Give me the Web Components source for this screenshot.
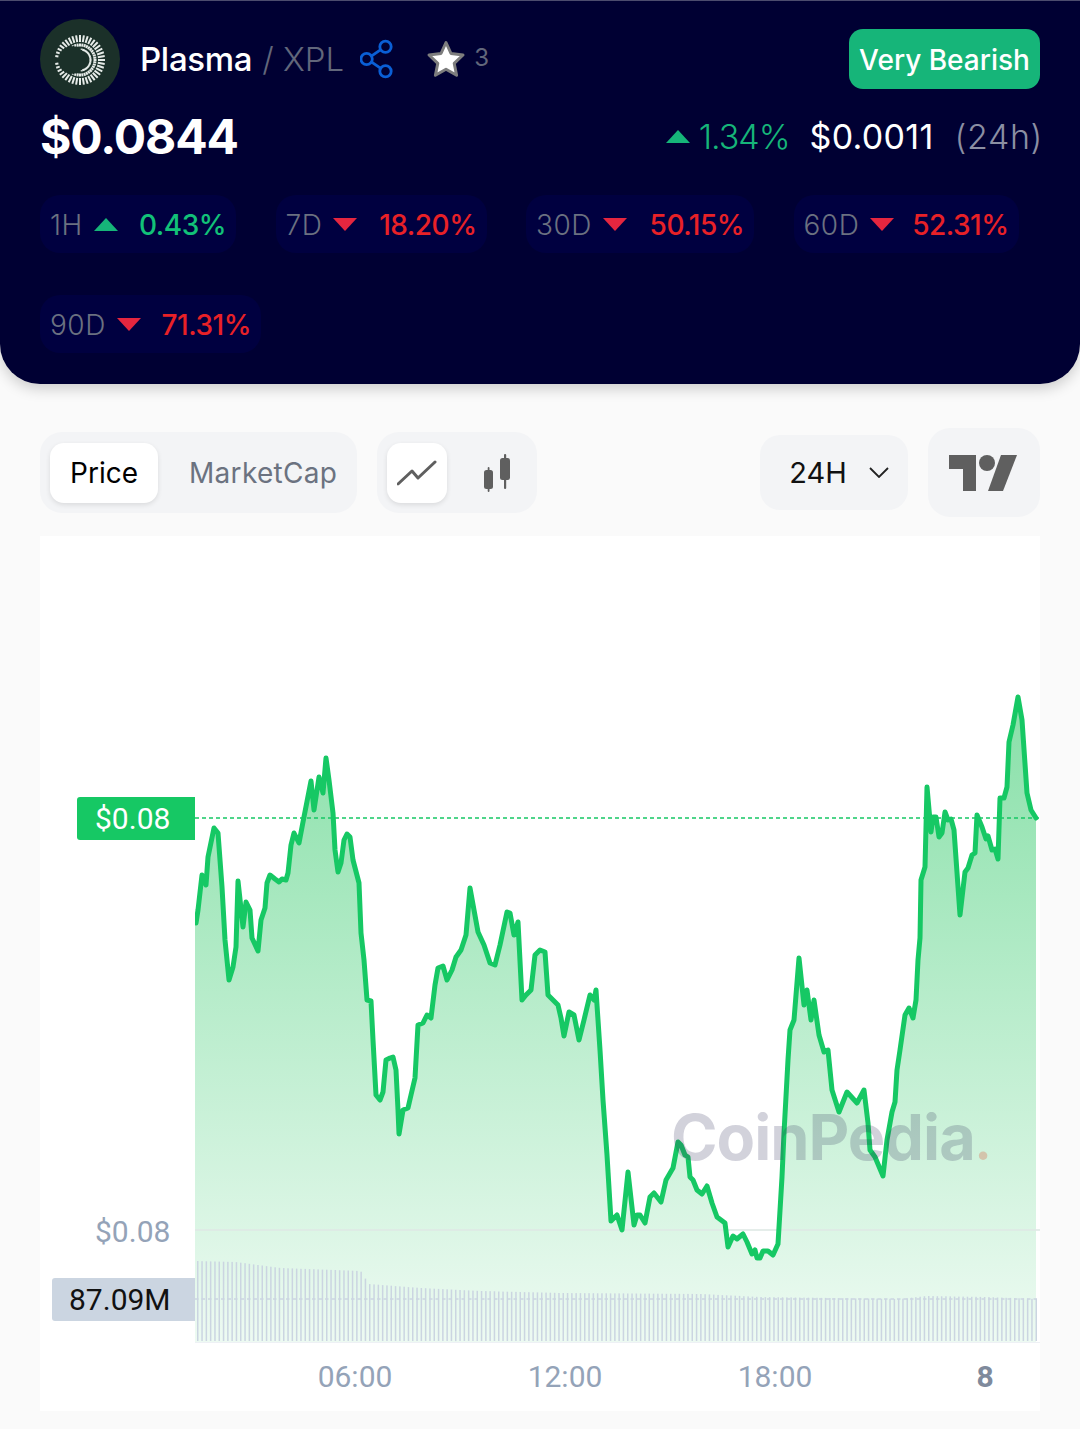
<!DOCTYPE html>
<html>
<head>
<meta charset="utf-8">
<title>Plasma</title>
<style>
    html, body { margin: 0; background: #fafafa; }
    body { font-family: "Inter", "Liberation Sans", sans-serif; width: 1080px; height: 1429px; overflow: hidden; }
</style>
</head>
<body>
<coin-header>
    <change-chip label="1H" value="0.43%" dir="up" w="196"></change-chip>
    <change-chip label="7D" value="18.20%" dir="down" w="211"></change-chip>
    <change-chip label="30D" value="50.15%" dir="down" w="228"></change-chip>
    <change-chip label="60D" value="52.31%" dir="down" w="225"></change-chip>
    <change-chip label="90D" value="71.31%" dir="down" w="221"></change-chip>
</coin-header>
<chart-toolbar></chart-toolbar>
<price-chart></price-chart>

<script>
const UP = `<svg width="24" height="13" viewBox="0 0 24 13"><path d="M12 0 24 13H0z" fill="#16b579"/></svg>`;
const DOWN = `<svg width="24" height="13" viewBox="0 0 24 13"><path d="M0 0H24L12 13z" fill="#e5263f"/></svg>`;

class ChangeChip extends HTMLElement {
    constructor() {
        super();
        this.attachShadow({ mode: "open" });
        const dir = this.getAttribute("dir");
        this.shadowRoot.innerHTML = `
            <style>
                :host {
                    display: inline-flex; align-items: center; height: 58px; width: ${this.getAttribute("w")}px;
                    padding: 2px 10px 0; border-radius: 20px; background: #000040;
                    font-size: 28px; box-sizing: border-box;
                }
                .label { color: #6b7180; margin-right: 11px; letter-spacing: .5px; font-weight: 300; }
                svg { display: block; margin: -2px 0 0; }
                .value { margin-left: auto; font-weight: 500; letter-spacing: -.5px; color: ${dir === "up" ? "#12c178" : "#e82127"}; }
            </style>
            <span class="label">${this.getAttribute("label")}</span>
            ${dir === "up" ? UP : DOWN}
            <span class="value">${this.getAttribute("value")}</span>
        `;
    }
}
customElements.define("change-chip", ChangeChip);

class CoinLogo extends HTMLElement {
    constructor() {
        super();
        this.attachShadow({ mode: "open" });
        // radial dashes between an outer circle and an off-centre hole, open on the left
        const d = 8, r = 14, outer = 25;
        let dashes = "";
        for (let a = -171; a <= 171; a += 9) {
            const rad = a * Math.PI / 180;
            const c = Math.cos(rad), s = Math.sin(rad);
            const inner = Math.max(9, -d * c + Math.sqrt(r * r - d * d * s * s));
            const x1 = 40 + outer * c, y1 = 41 + outer * s;
            const x2 = 40 + inner * c, y2 = 41 + inner * s;
            dashes += `<line x1="${x1.toFixed(1)}" y1="${y1.toFixed(1)}" x2="${x2.toFixed(1)}" y2="${y2.toFixed(1)}"/>`;
        }
        this.shadowRoot.innerHTML = `
            <style>:host { display: block; width: 80px; height: 80px; } svg { display: block; }</style>
            <svg width="80" height="80" viewBox="0 0 80 80">
                <circle cx="40" cy="40" r="40" fill="#1b3029"/>
                <g stroke="#e6ebe8" stroke-width="2" stroke-dasharray="7 1.500 3 2 2 2">${dashes}</g>
            </svg>
        `;
    }
}
customElements.define("coin-logo", CoinLogo);

class CoinHeader extends HTMLElement {
    constructor() {
        super();
        this.attachShadow({ mode: "open" });
        this.shadowRoot.innerHTML = `
            <style>
                :host {
                    display: block; box-sizing: border-box; height: 384px;
                    padding: 18px 40px 0; background: #000033; color: #fff;
                    border-top: 1px solid #4c4c6e;
                    border-radius: 0 0 40px 40px;
                    box-shadow: 0 5px 14px rgba(0,0,0,.18);
                }
                .top { display: flex; align-items: center; height: 80px; }
                .name { font-size: 33px; font-weight: 500; margin-left: 20px; letter-spacing: -.3px; }
                .sym { font-size: 33px; color: #62677b; margin-left: 10px; font-weight: 300; }
                .share { display: block; margin-left: 16px; }
                .star { display: block; margin-left: 32px; }
                .count { font-size: 24px; color: #62677b; margin-left: 8px; margin-top: -4px; }
                .mood {
                    margin-left: auto; height: 60px; width: 191px; box-sizing: border-box; padding-top: 2px;
                    border-radius: 14px; background: #16b579;
                    display: flex; align-items: center; justify-content: center;
                    font-size: 28px; font-weight: 500;
                }
                .prices { display: flex; align-items: center; height: 72px; margin-top: 1px; }
                .price { font-size: 48px; font-weight: 700; letter-spacing: -1.100px; }
                .change { margin: 0 -3px 0 auto; display: flex; align-items: center; font-size: 34px; }
                .change svg { margin-right: 9px; }
                .pct { color: #16b579; letter-spacing: -1px; font-weight: 300; }
                .abs { margin-left: 20px; letter-spacing: .3px; }
                .per { margin-left: 21px; color: #8b8fa3; font-weight: 300; letter-spacing: .6px; }
                .chips { display: flex; flex-wrap: wrap; gap: 42px 39.5px; margin-top: 23px; }
            </style>
            <div class="top">
                <coin-logo></coin-logo>
                <span class="name">Plasma</span>
                <span class="sym">/ XPL</span>
                <svg class="share" width="34" height="40" viewBox="0 0 36 42" fill="none" stroke="#0a5fd6" stroke-width="3">
                    <circle cx="27" cy="8" r="6"/><circle cx="7" cy="21" r="6"/><circle cx="27" cy="34" r="6"/>
                    <path d="M12 18 22 11M12 24 22 31"/>
                </svg>
                <svg class="star" width="40" height="38" viewBox="0 0 40 38">
                    <path d="M20 2.500 25 13.500 37 15 28.200 23.300 30.600 35.200 20 29.300 9.400 35.200 11.800 23.300 3 15 15 13.500z" fill="#fff" stroke="#7d7d7d" stroke-width="3" stroke-linejoin="round"/>
                </svg>
                <span class="count">3</span>
                <span class="mood">Very Bearish</span>
            </div>
            <div class="prices">
                <span class="price">$0.0844</span>
                <span class="change">
                    <svg width="24" height="13" viewBox="0 0 24 13"><path d="M12 0 24 13H0z" fill="#16b579"/></svg>
                    <span class="pct">1.34%</span>
                    <span class="abs">$0.0011</span>
                    <span class="per">(24h)</span>
                </span>
            </div>
            <div class="chips"><slot></slot></div>
        `;
    }
}
customElements.define("coin-header", CoinHeader);

class ChartToolbar extends HTMLElement {
    constructor() {
        super();
        this.attachShadow({ mode: "open" });
        this.shadowRoot.innerHTML = `
            <style>
                :host {
                    display: flex; align-items: center; height: 89px; margin-top: 44px;
                    padding: 0 40px; font-size: 28px;
                }
                .seg {
                    display: flex; align-items: center; height: 81px; box-sizing: border-box;
                    padding: 0 10px; background: #f3f4f6; border-radius: 22px;
                }
                .on {
                    height: 60px; background: #fff; border-radius: 14px; color: #000;
                    box-shadow: 0 2px 5px rgba(0,0,0,.1);
                    display: flex; align-items: center; justify-content: center;
                }
                .off { color: #6b7280; display: flex; align-items: center; }
                .price { width: 108px; }
                .cap { width: 189px; box-sizing: border-box; padding-left: 31px; letter-spacing: .3px; }
                .ico { width: 60px; }
                .ico2 { width: 80px; height: 60px; box-sizing: border-box; padding-left: 36px; }
                .types { margin-left: 20px; }
                .range {
                    margin-left: auto; width: 148px; height: 75px; box-sizing: border-box; padding-left: 10px;
                    border-radius: 20px; background: #f3f4f6; font-size: 29px;
                    display: flex; align-items: center; justify-content: center; gap: 22px; color: #111;
                }
                .tv {
                    margin-left: 20px; width: 112px; height: 89px; border-radius: 22px; background: #f3f4f6;
                    display: flex; align-items: center; justify-content: center;
                }
                .tv svg { margin-right: 2px; }
                svg { display: block; }
            </style>
            <div class="seg">
                <div class="on price">Price</div>
                <div class="off cap">MarketCap</div>
            </div>
            <div class="seg types">
                <div class="on ico">
                    <svg width="40" height="28" viewBox="0 0 40 28" fill="none" stroke="#5f5f5f" stroke-width="3" stroke-linecap="round" stroke-linejoin="round">
                        <path d="M1 25 15 12 21 19 38 3"/>
                    </svg>
                </div>
                <div class="off ico2">
                    <svg width="28" height="38" viewBox="0 0 28 38" fill="#5f5f5f">
                        <rect x="1" y="16" width="9" height="19" rx="2.500"/><rect x="4.700" y="13" width="1.800" height="25" rx=".9"/>
                        <rect x="17" y="4" width="10" height="22" rx="2.500"/><rect x="21" y="0" width="2.200" height="35" rx="1"/>
                    </svg>
                </div>
            </div>
            <div class="range">
                <span>24H</span>
                <svg width="20" height="11" viewBox="0 0 20 11" fill="none" stroke="#222" stroke-width="1.800"><path d="M1 1 10 10 19 1"/></svg>
            </div>
            <div class="tv">
                <svg width="68" height="36" viewBox="949 459 68 36" fill="#5f5f5f">
                    <path d="M949 459H976V495H963V473H949z"/><circle cx="987" cy="467" r="8"/><path d="M1001 459H1017L1003 495H988z"/>
                </svg>
            </div>
        `;
    }
}
customElements.define("chart-toolbar", ChartToolbar);

const LINE = [
    [196,923],[198,910],[202,875],[206,885],[208,857],[214,828],[218,833],[222,887],[225,940],[229,980],[233,967],[236,947],[238,881],[243,927],[246,902],[250,910],[252,938],[258,951],[261,920],[265,908],[267,883],[270,875],[275,879],[279,882],[282,879],[286,880],[288,873],[291,845],[294,833],[299,843],[303,822],[311,781],[314,810],[319,777],[323,793],[326,758],[329,780],[333,813],[335,850],[338,872],[341,863],[344,840],[347,834],[350,837],[353,860],[359,883],[361,933],[364,960],[367,1000],
    [371,1001],[373,1040],[376,1095],[380,1100],[383,1092],[386,1060],[390,1058],[393,1057],[396,1070],[398,1110],[399,1134],[403,1110],[408,1108],[411,1095],[415,1078],[418,1025],[423,1023],[427,1015],[431,1018],[435,985],[438,968],[443,966],[447,980],[452,970],[456,957],[461,950],[466,935],[470,888],[474,910],[478,932],[484,945],[490,963],[495,965],[500,945],[507,912],[510,913],[514,935],[518,922],[522,1000],[526,995],[531,990],[535,955],[540,950],[545,952],[548,995],[553,1000],[558,1005],[561,1018],[564,1036],[569,1012],[574,1015],[579,1040],[584,1020],[590,995],[594,1000],[596,990],[600,1050],[603,1100],[607,1155],[611,1221],[617,1215],[622,1230],[628,1172],[634,1225],[637,1215],[640,1215],[645,1223],[650,1197],[654,1193],[661,1202],[666,1180],[673,1168],[678,1142],[681,1145],[685,1155],[688,1157],[690,1177],[693,1180],[697,1190],[702,1194],[707,1186],[712,1203],[717,1217],[725,1223],[728,1247],[733,1236],[737,1239],[743,1234],[747,1242],[752,1254],[755,1250],[757,1258],[760,1258],[763,1251],[768,1251],[773,1255],[778,1244],[782,1177],[784,1133],[788,1060],
    [790,1030],[794,1020],[799,958],[804,1005],[807,990],[811,1020],[814,1000],[819,1035],[824,1052],[828,1050],[832,1090],[839,1112],[847,1092],[857,1103],[864,1090],[868,1123],[870,1150],[875,1157],[883,1176],[887,1140],[892,1112],[895,1102],[897,1070],[900,1050],[905,1015],[909,1008],[913,1018],[916,1000],[918,960],[920,938],[921,880],[925,867],[927,787],[931,832],[933,817],[936,817],[939,837],[942,833],[945,812],[948,820],[951,819],[954,830],[960,915],[965,872],[968,868],[972,855],[975,853],[977,815],[982,827],[986,839],[988,836],[992,850],[995,849],[998,859],[1000,798],[1004,798],[1007,787],[1009,742],[1013,725],[1018,697],[1022,720],[1027,793],[1031,810],[1036,818]
];

// top edge of the volume bars, by x
const VOLUME = [[195,1261],[235,1262],[280,1268],[360,1271],[368,1284],[420,1288],[480,1291],[560,1293],[700,1294],[760,1297],[900,1299],[925,1296],[985,1297],[1037,1299]];

function volumeTop(x) {
    for (let i = 1; i < VOLUME.length; i++) {
        if (x <= VOLUME[i][0]) {
            const [x0, y0] = VOLUME[i - 1], [x1, y1] = VOLUME[i];
            return y0 + (y1 - y0) * (x - x0) / (x1 - x0);
        }
    }
    return 1299;
}

class PriceChart extends HTMLElement {
    constructor() {
        super();
        this.attachShadow({ mode: "open" });
        const line = LINE.map(p => p.join(",")).join(" ");
        const area = `195,923 ${line} 1036,1342 195,1342`;
        let bars = "";
        for (let x = 197; x < 1038; x += 4.3) {
            const top = volumeTop(x);
            bars += `<rect x="${x.toFixed(1)}" y="${top.toFixed(1)}" width="1.500" height="${(1341 - top).toFixed(1)}"/>`;
        }
        this.shadowRoot.innerHTML = `
            <style>
                :host {
                    display: grid; grid-template-columns: 155px 845px; grid-template-rows: 807px 68px;
                    position: relative; width: 1000px; height: 875px; margin: 19px 40px 0; background: #fff;
                    font-family: "Roboto", "Liberation Sans", sans-serif; font-size: 30px;
                }
                .axis { position: relative; }
                .tag {
                    position: absolute; right: 0; box-sizing: border-box; display: flex; align-items: center;
                    border-radius: 3px 0 0 3px;
                }
                .last { top: 261px; width: 118px; height: 43px; background: #16c864; color: #fff; padding-left: 18px; }
                .low { top: 674px; width: 118px; height: 43px; color: #94a3b8; padding-left: 18px; }
                .vol { top: 742px; width: 143px; height: 43px; background: #cbd5e1; color: #111; padding-left: 17px; }
                svg { display: block; }
                .time {
                    grid-column: 2; display: flex; align-items: center; padding: 0 0 1px 55px; color: #94a3b8;
                }
                .time span, .time b { flex: none; width: 210px; text-align: center; }
                .time b { color: #7f8a9c; }
                .mark {
                    position: absolute; left: 631px; top: 563px; font-family: "Inter", sans-serif;
                    font-size: 63px; font-weight: 700; letter-spacing: -1px; color: rgba(50,50,90,.22);
                }
                .mark i { font-style: normal; font-size: 50px; color: rgba(220,90,60,.3); }
            </style>
            <div class="axis">
                <div class="tag last">$0.08</div>
                <div class="tag low">$0.08</div>
                <div class="tag vol">87.09M</div>
            </div>
            <svg width="845" height="807" viewBox="195 536 845 807">
                <defs>
                    <linearGradient id="fill" gradientUnits="userSpaceOnUse" x1="0" y1="697" x2="0" y2="1342">
                        <stop offset="0" stop-color="#22c55e" stop-opacity=".54"/>
                        <stop offset="1" stop-color="#22c55e" stop-opacity=".08"/>
                    </linearGradient>
                </defs>
                <rect x="193" y="536" width="2" height="807" fill="#eef1f5"/>
                <polygon points="${area}" fill="url(#fill)"/>
                <rect x="195" y="1229" width="845" height="2" fill="#dfe9e5" opacity=".8"/>
                <g fill="#cbd5e1">${bars}</g>
                <rect x="195" y="1342" width="845" height="1" fill="#eef1f5"/>
                <line x1="195" x2="1040" y1="1299" y2="1299" stroke="#cbd5e1" stroke-width="1.500" stroke-dasharray="3.500 3"/>
                <polyline points="${line}" fill="none" stroke="#16c864" stroke-width="5" stroke-linejoin="round" stroke-linecap="round"/>
                <line x1="195" x2="1040" y1="818" y2="818" stroke="#16c864" stroke-width="1.500" stroke-dasharray="4 3"/>
            </svg>
            <div class="time">
                <span>06:00</span><span>12:00</span><span>18:00</span><b>8</b>
            </div>
            <div class="mark">CoinPedia<i>.</i></div>
        `;
    }
}
customElements.define("price-chart", PriceChart);
</script>
</body>
</html>
